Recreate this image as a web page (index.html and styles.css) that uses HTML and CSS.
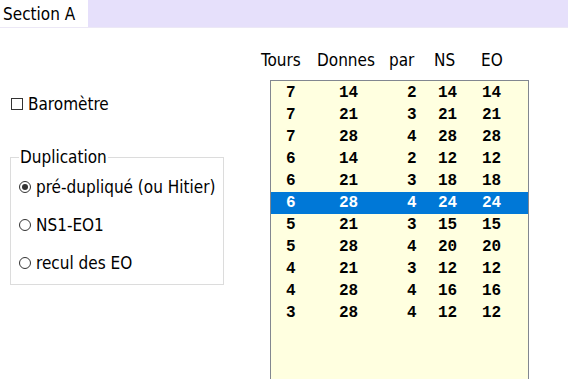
FILE: index.html
```html
<!DOCTYPE html>
<html lang="fr">
<head>
  <meta charset="UTF-8" />
  <title>Section A</title>
  <link rel="stylesheet" href="styles.css">
</head>
<body>
  <div class="tabbar">
    <div class="tab">Section A</div>
  </div>

  <div class="main">
    <div class="left">
      <div class="check-row">
        <span class="checkbox"></span>
        <span>Baromètre</span>
      </div>

      <fieldset class="group">
        <legend>Duplication</legend>
        <div class="radio-row"><span class="radio checked"></span><span>pré-dupliqué (ou Hitier)</span></div>
        <div class="radio-row"><span class="radio"></span><span>NS1-EO1</span></div>
        <div class="radio-row"><span class="radio"></span><span>recul des EO</span></div>
      </fieldset>
    </div>

    <div class="right">
      <div class="headers">
        <span class="h-tours">Tours</span>
        <span class="h-donnes">Donnes</span>
        <span class="h-par">par</span>
        <span class="h-ns">NS</span>
        <span>EO</span>
      </div>
      <div class="listbox" id="listbox"></div>
    </div>
  </div>

  <script>
    const rows = [
      [7, 14, 2, 14, 14],
      [7, 21, 3, 21, 21],
      [7, 28, 4, 28, 28],
      [6, 14, 2, 12, 12],
      [6, 21, 3, 18, 18],
      [6, 28, 4, 24, 24],
      [5, 21, 3, 15, 15],
      [5, 28, 4, 20, 20],
      [4, 21, 3, 12, 12],
      [4, 28, 4, 16, 16],
      [3, 28, 4, 12, 12]
    ];
    const listbox = document.getElementById('listbox');

    rows.forEach((r, i) => {
      const row = document.createElement('div');
      row.className = 'row' + (i === 5 ? ' selected' : '');
      r.forEach(v => {
        const cell = document.createElement('span');
        cell.textContent = v;
        row.appendChild(cell);
      });
      listbox.appendChild(row);
    });
  </script>
</body>
</html>
```

FILE: styles.css
```css
* {
  box-sizing: border-box;
}

html, body {
  overflow: hidden;
}

body {
  margin: 0;
  height: 379px;
  background: #fff;
  color: #000;
  font-family: "DejaVu Sans Condensed", "DejaVu Sans", sans-serif;
  font-stretch: condensed;
  font-size: 17px;
}

.tabbar {
  display: flex;
  height: 28px;
  background: #e6e0fb;
  border-bottom: 1px solid #ece8f6;
}

.tab {
  width: 88px;
  background: #fff;
  padding-left: 3px;
  line-height: 28px;
}

.main {
  display: flex;
}

.left {
  width: 258px;
  padding-left: 10px;
}

.check-row {
  display: flex;
  align-items: center;
  gap: 5px;
  height: 20px;
  margin-top: 66px;
  padding-left: 1px;
}

.checkbox {
  width: 12px;
  height: 12px;
  border: 1px solid #333;
  background: #fff;
}

.group {
  width: 214px;
  margin: 33px 0 0 0;
  padding: 1px 0 2px 8px;
  border: 1px solid #dcdcdc;
}

.group legend {
  padding: 0 1px;
  line-height: 20px;
}

.radio-row {
  display: flex;
  align-items: center;
  gap: 5px;
  height: 38px;
}

.radio {
  width: 12px;
  height: 12px;
  border: 1px solid #333;
  border-radius: 50%;
  background: #fff;
  display: flex;
  align-items: center;
  justify-content: center;
}

.radio.checked::after {
  content: "";
  width: 6px;
  height: 6px;
  border-radius: 50%;
  background: #333;
}

.right {
  padding-left: 3px;
}

.headers {
  display: flex;
  line-height: 20px;
  margin-top: 22px;
}

.h-tours { width: 56px; }
.h-donnes { width: 72px; }
.h-par { width: 45px; }
.h-ns { width: 47px; }

.listbox {
  width: 259px;
  height: 300px;
  margin: 10px 0 0 9px;
  padding-top: 1px;
  border: 1px solid #828790;
  border-bottom: none;
  background: #ffffe0;
  font-family: "Liberation Mono", monospace;
  font-weight: bold;
  font-size: 16px;
}

.row {
  display: grid;
  grid-template-columns: 53px 68px 31px 44px 1fr;
  height: 22px;
  line-height: 22px;
  padding-left: 15px;
}

.row.selected {
  background: #0078d7;
  color: #fff;
}
```
